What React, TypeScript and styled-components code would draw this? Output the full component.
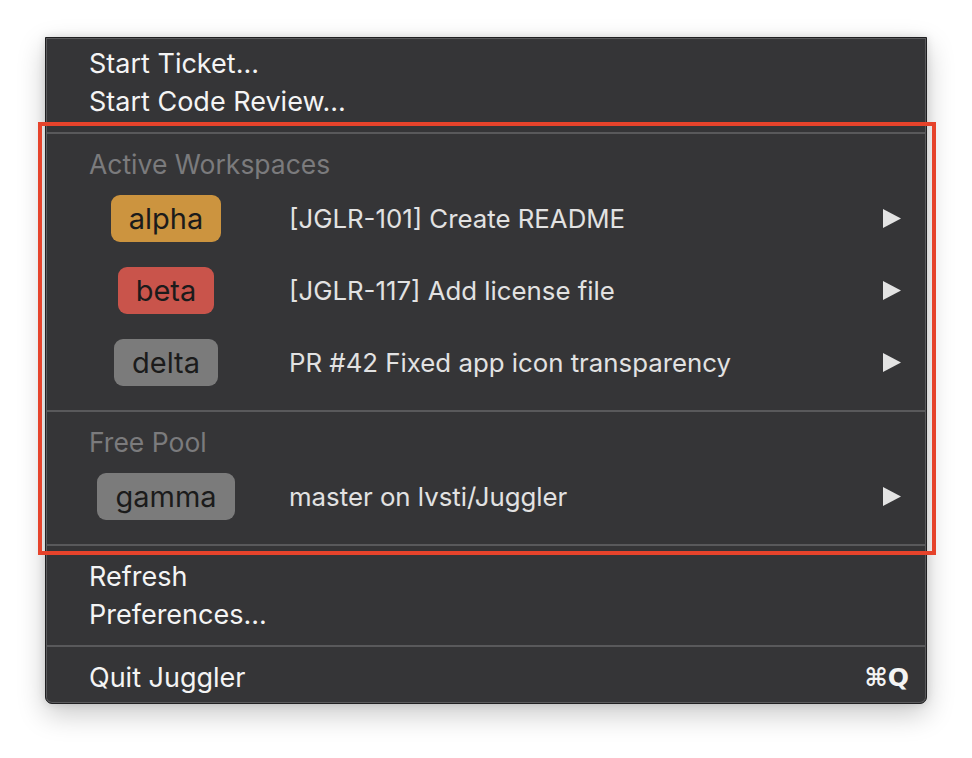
import React from "react";
import styled, { createGlobalStyle } from "styled-components";

const GlobalStyle = createGlobalStyle`
  html, body {
    margin: 0;
    padding: 0;
    background: #ffffff;
  }
  body {
    font-family: Inter, "Noto Sans", "Liberation Sans", sans-serif;
    -webkit-font-smoothing: antialiased;
  }
`;

const Stage = styled.div`
  position: relative;
  width: 972px;
  height: 758px;
  padding: 37px 0 0 45px;
  box-sizing: border-box;
`;

const Menu = styled.div`
  width: 882px;
  box-sizing: border-box;
  background: #353537;
  border: 1px solid #1f1f21;
  border-radius: 0 0 7px 7px;
  box-shadow: inset 0 0 0 1px #5a5a5c, 0 10px 28px rgba(0, 0, 0, 0.22),
    0 0 8px rgba(0, 0, 0, 0.12);
  padding: 6px 0 7px;
  display: flex;
  flex-direction: column;
`;

const Item = styled.div`
  height: 38px;
  display: flex;
  align-items: center;
  justify-content: space-between;
  padding: 0 17px 0 43px;
  color: #f4f4f4;
  font-size: 27px;
`;

const Shortcut = styled.span`
  font-family: "DejaVu Sans", Inter, sans-serif;
  font-size: 25px;
  font-weight: 600;
  color: #f4f4f4;
`;

const Separator = styled.div`
  padding: 12px 1px 11px;
  &::after {
    content: "";
    display: block;
    height: 2px;
    background: #59595b;
  }
`;

const Header = styled.div`
  height: 37px;
  display: flex;
  align-items: center;
  padding-left: 43px;
  color: #7b7b7d;
  font-size: 26.5px;
`;

const Row = styled.div`
  height: 72px;
  display: flex;
  align-items: center;
  padding-right: 25px;
`;

const BadgeCell = styled.div`
  width: 240px;
  display: flex;
  justify-content: center;
`;

const Badge = styled.span<{ $bg: string }>`
  height: 47px;
  box-sizing: border-box;
  padding: 0 18px;
  display: inline-flex;
  align-items: center;
  border-radius: 9px;
  background: ${(p) => p.$bg};
  color: #1b1b1b;
  font-size: 29px;
`;

const Title = styled.span`
  flex: 1;
  margin-left: 3px;
  color: #e2e2e2;
  font-size: 25.8px;
`;

const Arrow = styled.svg`
  width: 18px;
  height: 19px;
  display: block;
`;

const Annotation = styled.div`
  position: absolute;
  left: 38px;
  top: 122px;
  width: 898px;
  height: 433px;
  box-sizing: border-box;
  border: 4px solid #e6432b;
  pointer-events: none;
`;

type Workspace = { name: string; color: string; title: string };

const active: Workspace[] = [
  { name: "alpha", color: "#cc943f", title: "[JGLR-101] Create README" },
  { name: "beta", color: "#c9544b", title: "[JGLR-117] Add license file" },
  { name: "delta", color: "#7b7b7b", title: "PR #42 Fixed app icon transparency" },
];

const free: Workspace[] = [
  { name: "gamma", color: "#7b7b7b", title: "master on lvsti/Juggler" },
];

const WorkspaceRow = ({ w }: { w: Workspace }) => (
  <Row>
    <BadgeCell>
      <Badge $bg={w.color}>{w.name}</Badge>
    </BadgeCell>
    <Title>{w.title}</Title>
    <Arrow viewBox="0 0 18 19">
      <polygon points="0,0 18,9.5 0,19" fill="#e3e3e3" />
    </Arrow>
  </Row>
);

export default function App() {
  return (
    <>
      <GlobalStyle />
      <Stage>
        <Menu>
          <Item>Start Ticket...</Item>
          <Item>Start Code Review...</Item>
          <Separator />
          <Header>Active Workspaces</Header>
          {active.map((w) => (
            <WorkspaceRow key={w.name} w={w} />
          ))}
          <Separator />
          <Header>Free Pool</Header>
          {free.map((w) => (
            <WorkspaceRow key={w.name} w={w} />
          ))}
          <Separator />
          <Item>Refresh</Item>
          <Item>Preferences...</Item>
          <Separator />
          <Item>
            <span>Quit Juggler</span>
            <Shortcut>⌘Q</Shortcut>
          </Item>
        </Menu>
        <Annotation />
      </Stage>
    </>
  );
}
